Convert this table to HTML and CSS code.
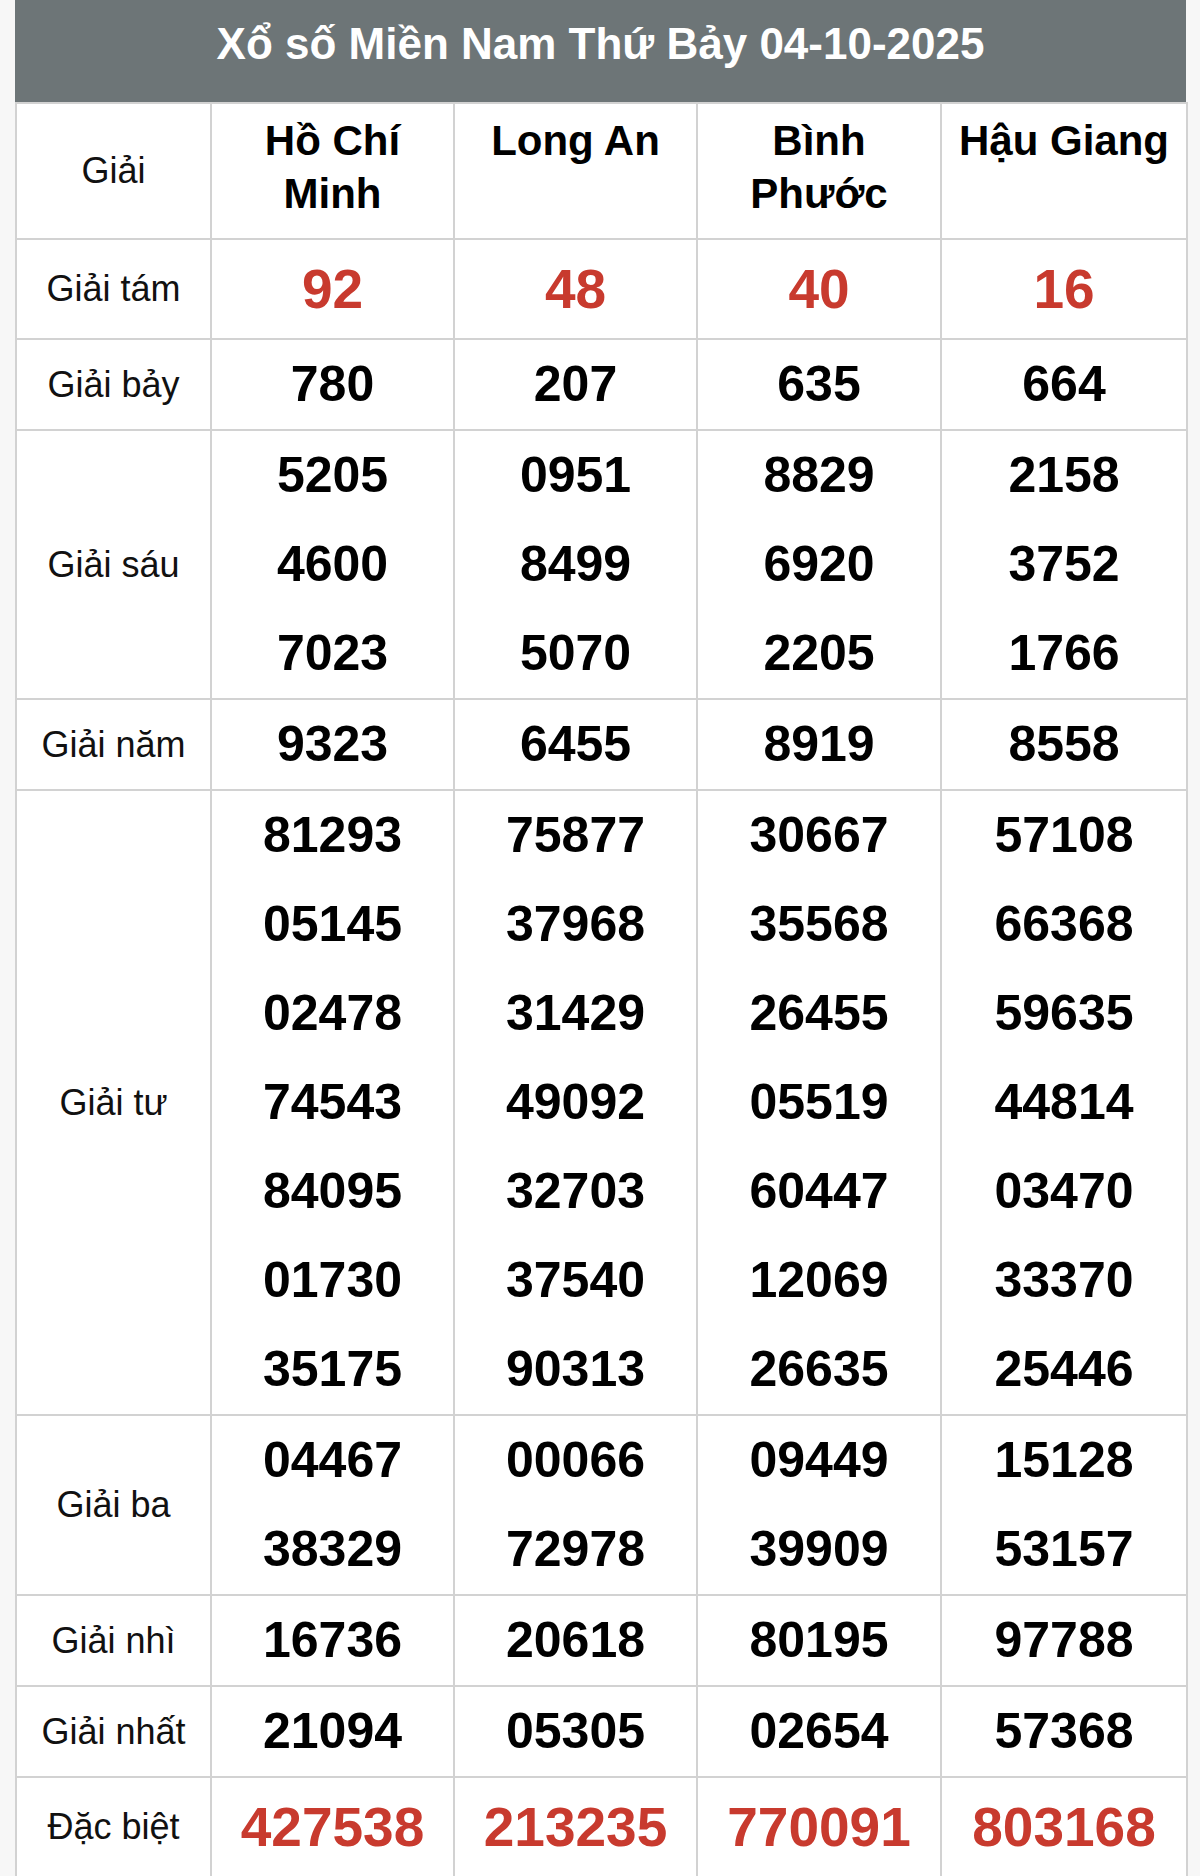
FILE: index.html
```html
<!DOCTYPE html>
<html lang="vi">
<head>
<meta charset="utf-8">
<title>Xổ số Miền Nam Thứ Bảy 04-10-2025</title>
<link rel="stylesheet" href="styles.css">
</head>
<body>
<div class="wrap">
  <div class="title">Xổ số Miền Nam Thứ Bảy 04-10-2025</div>
  <table class="kq">
    <colgroup>
      <col class="c-label">
      <col class="c-a">
      <col class="c-b">
      <col class="c-c">
      <col class="c-d">
    </colgroup>
    <thead>
      <tr class="head">
        <th class="label">Giải</th>
        <th class="station">Hồ Chí<br>Minh</th>
        <th class="station">Long An</th>
        <th class="station">Bình<br>Phước</th>
        <th class="station">Hậu Giang</th>
      </tr>
    </thead>
    <tbody>
      <tr class="big">
        <td class="label">Giải tám</td>
        <td class="red">92</td><td class="red">48</td><td class="red">40</td><td class="red">16</td>
      </tr>
      <tr>
        <td class="label">Giải bảy</td>
        <td><div>780</div></td><td><div>207</div></td><td><div>635</div></td><td><div>664</div></td>
      </tr>
      <tr>
        <td class="label">Giải sáu</td>
        <td><div>5205</div><div>4600</div><div>7023</div></td>
        <td><div>0951</div><div>8499</div><div>5070</div></td>
        <td><div>8829</div><div>6920</div><div>2205</div></td>
        <td><div>2158</div><div>3752</div><div>1766</div></td>
      </tr>
      <tr>
        <td class="label">Giải năm</td>
        <td><div>9323</div></td><td><div>6455</div></td><td><div>8919</div></td><td><div>8558</div></td>
      </tr>
      <tr>
        <td class="label">Giải tư</td>
        <td><div>81293</div><div>05145</div><div>02478</div><div>74543</div><div>84095</div><div>01730</div><div>35175</div></td>
        <td><div>75877</div><div>37968</div><div>31429</div><div>49092</div><div>32703</div><div>37540</div><div>90313</div></td>
        <td><div>30667</div><div>35568</div><div>26455</div><div>05519</div><div>60447</div><div>12069</div><div>26635</div></td>
        <td><div>57108</div><div>66368</div><div>59635</div><div>44814</div><div>03470</div><div>33370</div><div>25446</div></td>
      </tr>
      <tr>
        <td class="label">Giải ba</td>
        <td><div>04467</div><div>38329</div></td>
        <td><div>00066</div><div>72978</div></td>
        <td><div>09449</div><div>39909</div></td>
        <td><div>15128</div><div>53157</div></td>
      </tr>
      <tr>
        <td class="label">Giải nhì</td>
        <td><div>16736</div></td><td><div>20618</div></td><td><div>80195</div></td><td><div>97788</div></td>
      </tr>
      <tr>
        <td class="label">Giải nhất</td>
        <td><div>21094</div></td><td><div>05305</div></td><td><div>02654</div></td><td><div>57368</div></td>
      </tr>
      <tr class="big">
        <td class="label">Đặc biệt</td>
        <td class="red">427538</td><td class="red">213235</td><td class="red">770091</td><td class="red">803168</td>
      </tr>
    </tbody>
  </table>
</div>
</body>
</html>
```

FILE: styles.css
```css
html, body {
  margin: 0;
  padding: 0;
  background: #f7f7f7;
}

body {
  font-family: "Liberation Sans", Arial, sans-serif;
  color: #000;
}

.wrap {
  width: 1171px;
  margin: 0 0 0 15px;
  background: #fff;
}

.title {
  background: #6d7577;
  color: #fff;
  font-weight: bold;
  font-size: 44px;
  line-height: 60px;
  padding: 14px 0 28px;
  text-align: center;
}

.kq {
  width: 1171px;
  border-collapse: collapse;
  table-layout: fixed;
  background: #fff;
}

.c-label { width: 195px; }
.c-a { width: 243px; }
.c-b { width: 243px; }
.c-c { width: 244px; }
.c-d { width: 246px; }

.kq th,
.kq td {
  border: 2px solid #d2d2d2;
  padding: 0;
  text-align: center;
  vertical-align: middle;
}

.kq th.station {
  font-size: 42px;
  font-weight: bold;
  line-height: 53px;
  vertical-align: top;
  padding: 10px 2px 18px;
  height: 106px;
}

.kq .label {
  font-size: 36px;
  font-weight: normal;
  line-height: 40px;
  color: #111;
}

.kq td div {
  font-size: 50px;
  font-weight: bold;
  line-height: 89px;
}

.kq td.red {
  font-size: 55px;
  font-weight: bold;
  line-height: 98px;
  color: #c83a2e;
}
```
